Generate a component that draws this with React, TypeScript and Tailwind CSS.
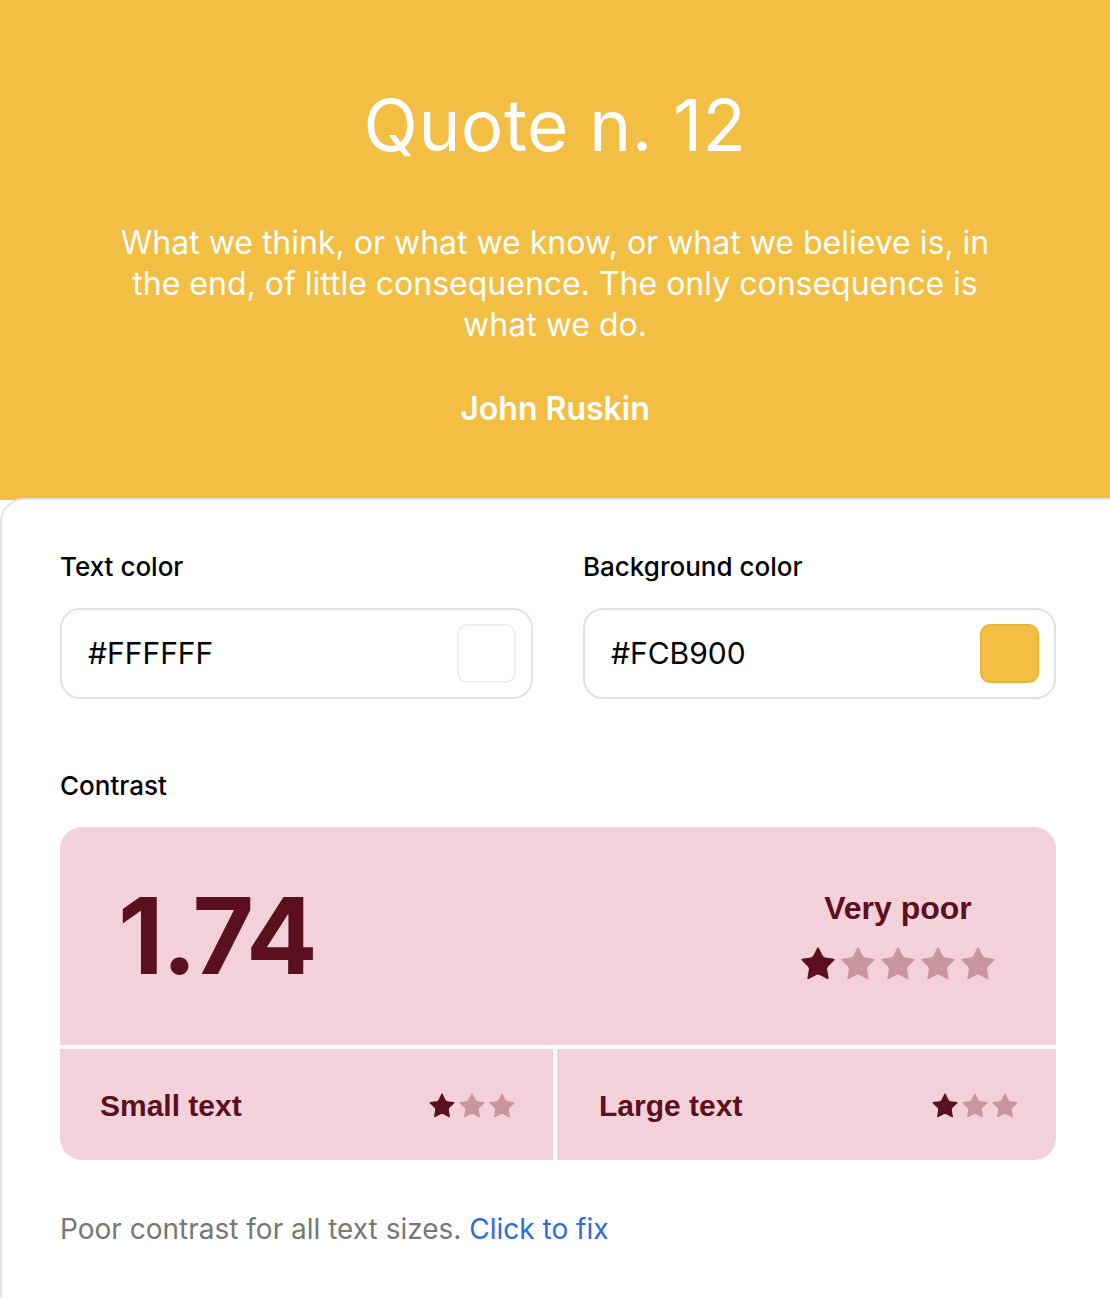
import { Star } from 'lucide-react'

const maroon = 'text-[#5b1020]'

function Stars({ total, filled, size }: { total: number; filled: number; size: number }) {
  return (
    <div className="flex items-center">
      {Array.from({ length: total }).map((_, i) => (
        <Star
          key={i}
          size={size}
          strokeWidth={0}
          className={i < filled ? 'fill-[#5b1020]' : 'fill-[#c9959f]'}
        />
      ))}
    </div>
  )
}

function ColorField({ label, value, swatch }: { label: string; value: string; swatch: string }) {
  return (
    <div className="flex flex-col">
      <span className="text-[26px] font-medium text-black leading-none mt-[54px]">{label}</span>
      <div className="mt-[28px] h-[91px] border-2 border-[#e2e2e2] rounded-[20px] flex items-center justify-between pl-[26px] pr-[15px]">
        <span className="text-[30px] text-black">{value}</span>
        <div className={`w-[59px] h-[59px] rounded-[10px] border-2 ${swatch}`} />
      </div>
    </div>
  )
}

export default function App() {
  return (
    <div className="w-[1110px] h-[1300px] bg-white overflow-hidden font-['Inter',sans-serif]">
      <header className="h-[500px] bg-[#f2be43] flex flex-col items-center text-white text-center">
        <h1 className="text-[71px] font-normal leading-none mt-[90px] tracking-[0.5px]">Quote n. 12</h1>
        <p className="text-[32px] leading-[41px] mt-[61px] w-[900px]">
          What we think, or what we know, or what we believe is, in the end, of little consequence. The only consequence is
          what we do.
        </p>
        <p className="text-[32px] font-semibold mt-[40px]">John Ruskin</p>
      </header>

      <section className="w-[1140px] h-[800px] bg-white border-l-2 border-t-2 border-[#e4e4e4] rounded-tl-[24px] -mt-[2px] pl-[58px]">
        <div className="w-[996px]">
          <div className="grid grid-cols-2 gap-[50px]">
            <ColorField label="Text color" value="#FFFFFF" swatch="bg-white border-[#eeeeee]" />
            <ColorField label="Background color" value="#FCB900" swatch="bg-[#f2be43] border-[#e9b43a]" />
          </div>

          <p className="text-[26px] font-medium text-black leading-none mt-[74px]">Contrast</p>

          <div className="mt-[28px] rounded-[22px] overflow-hidden bg-white flex flex-col gap-[4px]">
            <div className="h-[218px] bg-[#f3d1da] flex items-center justify-between pl-[58px] pr-[58px]">
              <span className={`text-[106px] font-bold leading-none tracking-[-2px] ${maroon}`}>1.74</span>
              <div className="flex flex-col items-center -mt-[4px]">
                <span className={`text-[32px] font-semibold font-['Liberation_Sans',sans-serif] ${maroon}`}>Very poor</span>
                <div className="mt-[12px]">
                  <Stars total={5} filled={1} size={40} />
                </div>
              </div>
            </div>
            <div className="h-[111px] grid grid-cols-[493px_1fr] gap-[4px]">
              <div className="bg-[#f3d1da] flex items-center justify-between pl-[40px] pr-[36px] pt-[2px]">
                <span className={`text-[30px] font-semibold font-['Liberation_Sans',sans-serif] ${maroon}`}>Small text</span>
                <Stars total={3} filled={1} size={30} />
              </div>
              <div className="bg-[#f3d1da] flex items-center justify-between pl-[42px] pr-[36px] pt-[2px]">
                <span className={`text-[30px] font-semibold font-['Liberation_Sans',sans-serif] ${maroon}`}>Large text</span>
                <Stars total={3} filled={1} size={30} />
              </div>
            </div>
          </div>

          <p className="text-[28px] text-[#777777] mt-[48px]">
            Poor contrast for all text sizes. <span className="text-[#2f6be0]">Click to fix</span>
          </p>
        </div>
      </section>
    </div>
  )
}
